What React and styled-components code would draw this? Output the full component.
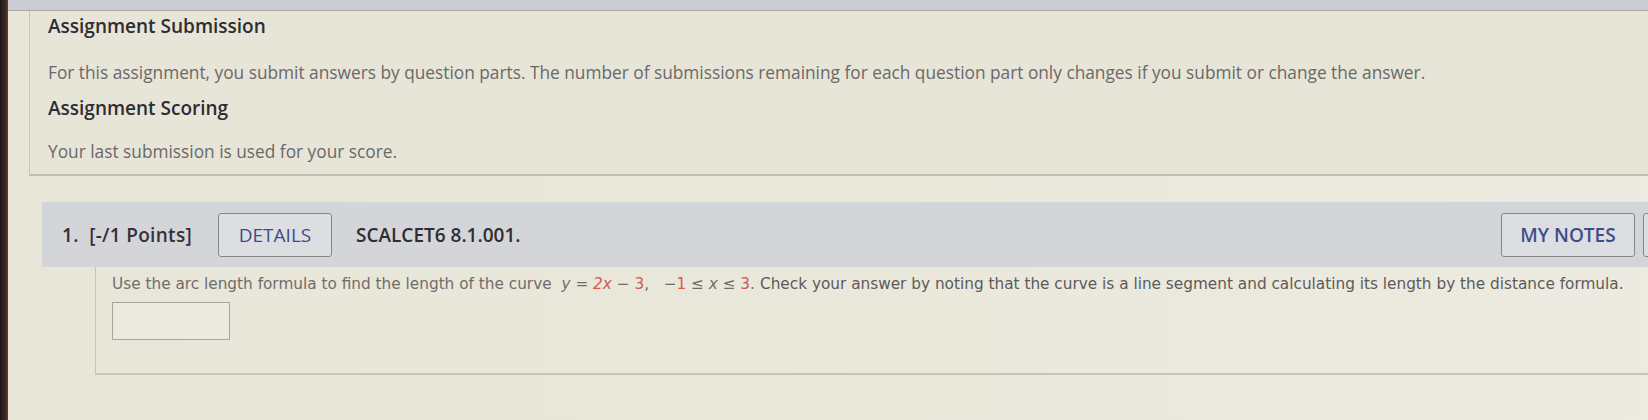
import React from "react";
import styled, { createGlobalStyle } from "styled-components";

const Global = createGlobalStyle`
  html, body { margin: 0; padding: 0; }
  body {
    width: 1648px;
    height: 420px;
    overflow: hidden;
    background: linear-gradient(90deg, #e8e6d8 0%, #eae8db 55%, #edebe1 100%);
    font-family: "Open Sans", "Liberation Sans", sans-serif;
  }
`;

const Screen = styled.div`
  display: flex;
  height: 420px;
`;

const Bezel = styled.div`
  width: 8px;
  flex: none;
  background: linear-gradient(90deg, #1f1715 0%, #3a2a24 70%, #7a3a26 100%);
`;

const Main = styled.div`
  flex: 1;
  min-width: 0;
  display: flex;
  flex-direction: column;
  overflow: hidden;
`;

const TopBand = styled.div`
  height: 10px;
  flex: none;
  background: #cbccd4;
  border-bottom: 1px solid #a9a9a8;
`;

const InfoPanel = styled.section`
  margin-left: 21px;
  margin-right: -40px;
  background: #e7e5d7;
  border-left: 1px solid #c9c7b9;
  border-bottom: 2px solid #c2c0b3;
  padding: 2px 18px 9px 18px;
`;

const Heading = styled.h2`
  margin: ${(p) => p.$mt || 0}px 0 0 0;
  font-size: 19px;
  line-height: 26px;
  font-weight: 600;
  color: #2f2c33;
`;

const Para = styled.p`
  margin: ${(p) => p.$mt || 0}px 0 0 0;
  font-size: 17.3px;
  line-height: 26px;
  font-weight: 400;
  color: #6a686a;
`;

const Question = styled.section`
  margin-top: 25px;
  margin-left: 34px;
  display: flex;
  flex-direction: column;
`;

const QHeader = styled.div`
  display: flex;
  align-items: center;
  height: 65px;
  margin-right: -205px;
  padding: 0 20px;
  background: #d3d5d9;
  border-top: 1px solid #e4e5e8;
`;

const QNumber = styled.span`
  font-size: 19px;
  font-weight: 600;
  color: #35303b;
  letter-spacing: 0.3px;
`;

const QButton = styled.button`
  height: 44px;
  padding: 0;
  width: ${(p) => p.$w}px;
  margin-left: ${(p) => p.$ml || 0}px;
  flex: none;
  background: #dddee1;
  border: 1px solid #85868c;
  border-radius: 3px;
  font-family: "Open Sans", "Liberation Sans", sans-serif;
  font-size: 19px;
  font-weight: ${(p) => p.$fw || 400};
  color: #3e4c8c;
`;

const QCode = styled.span`
  margin-left: 24px;
  font-size: 19px;
  font-weight: 600;
  color: #2f2d31;
`;

const Spacer = styled.div`
  flex: 1;
`;

const QBody = styled.div`
  margin-left: 53px;
  margin-right: -40px;
  border-left: 1px solid #c7c5b8;
  border-bottom: 2px solid #c7c5b8;
  padding: 5px 16px 33px 16px;
`;

const QText = styled.p`
  margin: 0;
  font-family: "DejaVu Sans", Verdana, sans-serif;
  font-size: 15.3px;
  line-height: 24px;
  color: #6f6d6c;
  white-space: nowrap;
`;

const MathExpr = styled.span`
  margin: 0 5px;
`;

const V = styled.i`
  font-style: italic;
  color: ${(p) => (p.$red ? "#d65a4c" : "inherit")};
`;

const Red = styled.span`
  color: #d65a4c;
`;

const Later = styled.span`
  color: #5c5a5b;
`;

const AnswerBox = styled.div`
  margin-top: 6px;
  width: 116px;
  height: 36px;
  border: 1.5px solid #a7a59e;
  background: #eceadf;
`;

export default function App() {
  return (
    <>
      <Global />
      <Screen>
        <Bezel />
        <Main>
          <TopBand />
          <InfoPanel>
            <Heading>Assignment Submission</Heading>
            <Para $mt={21}>
              For this assignment, you submit answers by question parts. The number of submissions remaining for each question part only changes if you submit or change the answer.
            </Para>
            <Heading $mt={9}>Assignment Scoring</Heading>
            <Para $mt={18}>Your last submission is used for your score.</Para>
          </InfoPanel>
          <Question>
            <QHeader>
              <QNumber>1.&nbsp; [-/1 Points]</QNumber>
              <QButton $w={114} $ml={26}>DETAILS</QButton>
              <QCode>SCALCET6 8.1.001.</QCode>
              <Spacer />
              <QButton $w={134} $fw={600}>MY NOTES</QButton>
              <QButton $w={190} $ml={8} $fw={600} aria-label="Ask Your Teacher" />
            </QHeader>
            <QBody>
              <QText>
                Use the arc length formula to find the length of the curve
                <MathExpr>
                  {" "}<V>y</V> = <V $red>2x</V> − <Red>3</Red>,&nbsp;&nbsp;&nbsp;−<Red>1</Red> ≤ <V>x</V> ≤ <Red>3</Red>.
                </MathExpr>
                <Later>Check your answer by noting that the curve is a line segment and calculating its length by the distance formula.</Later>
              </QText>
              <AnswerBox />
            </QBody>
          </Question>
        </Main>
      </Screen>
    </>
  );
}
